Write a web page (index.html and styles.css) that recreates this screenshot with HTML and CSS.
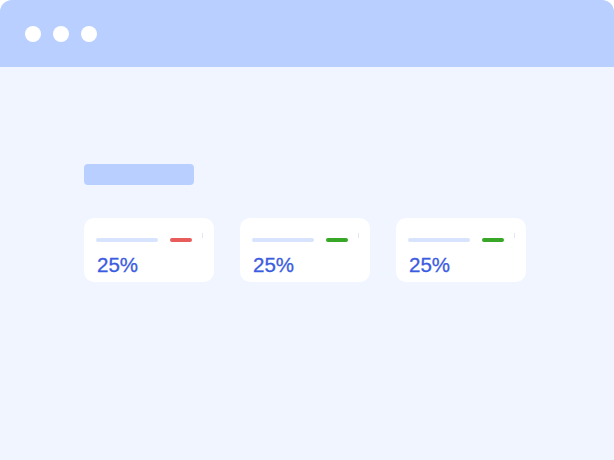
FILE: index.html
```html
<!DOCTYPE html>
<html>
<head>
<meta charset="utf-8">
<link rel="stylesheet" href="styles.css">
</head>
<body>
<div class="window">
  <div class="titlebar">
    <span class="dot"></span><span class="dot"></span><span class="dot"></span>
  </div>
  <div class="content">
    <div class="placeholder"></div>
    <div class="cards">
      <div class="card">
        <div class="card-top"><span class="line"></span><span class="status red"></span><span class="tick"></span></div>
        <div class="value">25%</div>
      </div>
      <div class="card">
        <div class="card-top"><span class="line"></span><span class="status green"></span><span class="tick"></span></div>
        <div class="value">25%</div>
      </div>
      <div class="card">
        <div class="card-top"><span class="line"></span><span class="status green"></span><span class="tick"></span></div>
        <div class="value">25%</div>
      </div>
    </div>
  </div>
</div>
</body>
</html>
```
FILE: styles.css
```css
html, body { margin: 0; padding: 0; background: #ffffff; }
.window {
  width: 614px;
  height: 460px;
  background: #f0f5ff;
  border-radius: 12px 12px 0 0;
  overflow: hidden;
  font-family: "Liberation Sans", Arial, sans-serif;
}
.titlebar {
  height: 67px;
  background: #b8cfff;
  display: flex;
  align-items: center;
  padding-left: 25px;
  gap: 12px;
}
.dot {
  width: 16px;
  height: 16px;
  border-radius: 50%;
  background: #ffffff;
}
.content {
  padding: 97px 0 0 84px;
}
.placeholder {
  width: 110px;
  height: 21px;
  border-radius: 4px;
  background: #b8cfff;
}
.cards {
  display: flex;
  gap: 26px;
  margin-top: 33px;
}
.card {
  width: 130px;
  height: 64px;
  box-sizing: border-box;
  background: #ffffff;
  border-radius: 10px;
  padding: 20px 10px 0 12px;
}
.card-top {
  display: flex;
  align-items: flex-start;
  height: 4px;
}
.line {
  flex: none;
  width: 62px;
  height: 4px;
  border-radius: 2px;
  background: #d8e4fd;
}
.status {
  flex: none;
  width: 22px;
  height: 4px;
  border-radius: 2px;
  margin-left: 12px;
}
.red { background: #e85c5c; }
.green { background: #38a626; }
.tick {
  flex: none;
  width: 1px;
  height: 5px;
  margin-left: 10px;
  margin-top: -5px;
  background: #dfe6f4;
}
.value {
  margin-top: 13px;
  padding-left: 1px;
  font-size: 20.5px;
  line-height: 20px;
  font-weight: 400;
  color: #3b5ce0;
  -webkit-text-stroke: 0.3px #3b5ce0;
}
```
